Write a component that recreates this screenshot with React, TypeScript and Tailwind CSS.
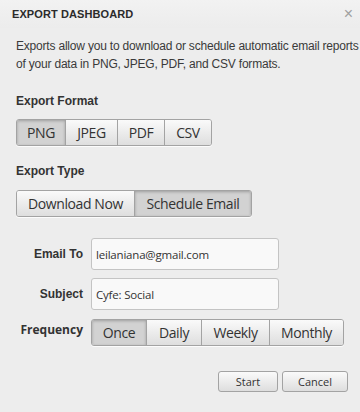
import { useState } from 'react'

const helv = { fontFamily: '"Liberation Sans", Arial, sans-serif' }
const human = { fontFamily: '"Open Sans", "Noto Sans", sans-serif' }

const btnBase =
  'h-full border-r border-[#a3a3a3] last:border-r-0 text-[14px] tracking-[-0.4px] text-[#333] leading-none flex items-center justify-center'
const btnOff = 'bg-gradient-to-b from-[#fafafa] to-[#dedede]'
const btnOn = 'bg-[#d2d2d2] shadow-[inset_0_1px_3px_rgba(0,0,0,0.25)]'

function Segmented({
  options,
  widths,
  value,
  onChange,
}: {
  options: string[]
  widths: string[]
  value: string
  onChange: (v: string) => void
}) {
  return (
    <div
      className="flex h-[27px] w-fit overflow-hidden rounded-[3px] border border-[#a3a3a3] shadow-[0_1px_0_rgba(255,255,255,0.8)]"
      style={human}
    >
      {options.map((o, i) => (
        <button
          key={o}
          type="button"
          onClick={() => onChange(o)}
          className={`${btnBase} ${widths[i]} ${value === o ? btnOn : btnOff}`}
        >
          {o}
        </button>
      ))}
    </div>
  )
}

const inputCls =
  'h-[32px] w-[188px] rounded-[3px] border border-[#c4c4c4] bg-[#f9f9f9] px-[4px] text-[11.5px] tracking-[-0.2px] text-[#333] outline-none'

export default function App() {
  const [format, setFormat] = useState('PNG')
  const [type, setType] = useState('Schedule Email')
  const [freq, setFreq] = useState('Once')

  return (
    <div className="h-[412px] w-[360px] overflow-hidden bg-[#ededed] text-[#333]" style={helv}>
      <div className="flex h-[28px] items-center justify-between bg-gradient-to-b from-[#f2f2f2] to-[#ececec] pl-3 pr-[7px]">
        <h1 className="text-[11px] font-bold tracking-[0.1px] text-[#2b2b2b]">EXPORT DASHBOARD</h1>
        <span className="text-[16px] font-light leading-none text-[#a0a0a0]">×</span>
      </div>

      <div className="px-4">
        <p className="mr-[-16px] mt-[9px] text-[12px] leading-[18px] tracking-[-0.2px] text-[#3a3a3a]">
          Exports allow you to download or schedule automatic email reports of your data in PNG,
          JPEG, PDF, and CSV formats.
        </p>

        <h2 className="mt-[19px] text-[12px] font-bold text-[#333]">Export Format</h2>
        <div className="mt-[9px]">
          <Segmented
            options={['PNG', 'JPEG', 'PDF', 'CSV']}
            widths={['w-[49px]', 'w-[52px]', 'w-[47px]', 'w-[46px]']}
            value={format}
            onChange={setFormat}
          />
        </div>

        <h2 className="mt-[16px] text-[12px] font-bold text-[#333]">Export Type</h2>
        <div className="mt-[10px]">
          <Segmented
            options={['Download Now', 'Schedule Email']}
            widths={['w-[118px]', 'w-[116px]']}
            value={type}
            onChange={setType}
          />
        </div>

        <div className="mt-[21px] grid grid-cols-[67px_1fr] items-center gap-x-2 gap-y-2">
          <label className="text-right text-[12px] font-bold">Email To</label>
          <input defaultValue="leilaniana@gmail.com" className={inputCls} style={human} />
          <label className="text-right text-[12px] font-bold">Subject</label>
          <input defaultValue="Cyfe: Social" className={inputCls} style={human} />
          <label className="-mt-[4px] text-right text-[12px] font-bold" style={human}>
            Frequency
          </label>
          <div className="mt-[1px]">
            <Segmented
              options={['Once', 'Daily', 'Weekly', 'Monthly']}
              widths={['w-[55px]', 'w-[55px]', 'w-[68px]', 'w-[73px]']}
              value={freq}
              onChange={setFreq}
            />
          </div>
        </div>

        <div className="mr-[-4px] mt-[25px] flex justify-end gap-[4px]" style={human}>
          <button
            type="button"
            className="h-[21px] w-[60px] rounded-[3px] border border-[#a3a3a3] bg-gradient-to-b from-[#fafafa] to-[#dedede] text-[11px] leading-none text-[#333]"
          >
            Start
          </button>
          <button
            type="button"
            className="h-[21px] w-[66px] rounded-[3px] border border-[#a3a3a3] bg-gradient-to-b from-[#fafafa] to-[#dedede] text-[11px] leading-none text-[#333]"
          >
            Cancel
          </button>
        </div>
      </div>
    </div>
  )
}
